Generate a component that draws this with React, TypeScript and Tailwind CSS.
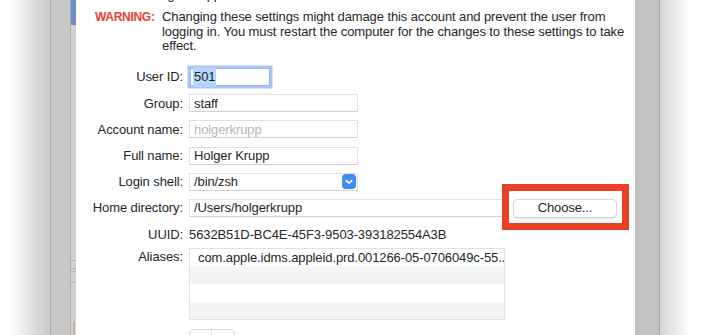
import React from "react";

const font = { fontFamily: "'Liberation Sans', Arial, sans-serif" };

function Row({ label, children }: { label: string; children: React.ReactNode }) {
  return (
    <div className="flex h-[26.2px] items-center">
      <div className="w-[107px] shrink-0 text-right text-[13px] text-[#262626]">{label}</div>
      <div className="ml-[6px] flex items-center">{children}</div>
    </div>
  );
}

function Field({ value, w, gray = false }: { value: string; w: string; gray?: boolean }) {
  return (
    <div className={"flex h-[18px] items-center border border-[#e0e0e0] border-b-[#cfcfcf] bg-white pl-[4px] text-[13px] " + w + (gray ? " text-[#b4b4b4]" : " text-[#1f1f1f]")}>
      {value}
    </div>
  );
}

export default function App() {
  return (
    <div className="relative flex h-[335px] w-[710px] overflow-hidden bg-white tracking-[-0.1px]" style={font}>
      {/* left backdrop */}
      <div className="h-full w-[50px] shrink-0 bg-gradient-to-r from-white from-20% to-[#c8c8c8]" />
      <div className="h-full w-[20px] shrink-0 border-l border-[#ababab] bg-[#c7c7c7]" />
      <div className="flex h-full w-[6px] shrink-0 flex-col border-l border-[#acacac] bg-[#d2d2d2]">
        <div className="h-[25px] w-full bg-[#6f8fc4]" />
        <div className="mt-[235px] h-[10px] w-full border-y border-[#b5b5b5]" />
        <div className="mt-[2px] h-[12px] w-full border-y border-[#b5b5b5]" />
        <div className="mt-[38px] ml-[2px] h-[14px] w-[2px] bg-[#c9b19a]" />
      </div>

      {/* dialog */}
      <div className="flex h-full w-[559px] shrink-0 flex-col bg-white text-[#262626]">
        <div className="mt-[-13px] h-[15px] pl-[66px] text-[13px] leading-[15px] text-[#262626]">Using the apple</div>
        <div className="mt-[8px] flex pl-[19px] text-[13px] leading-[14.5px]">
          <div className="w-[67px] shrink-0 text-[12px] font-bold tracking-[-0.3px] text-[#e8432f]">WARNING:</div>
          <div className="w-[475px] shrink-0 text-[#262626]">
            Changing these settings might damage this account and prevent the user from logging in. You must restart the computer for the changes to these settings to take effect.
          </div>
        </div>

        <div className="mt-[10.5px] flex flex-col">
          <Row label="User ID:">
            <div className="ml-[1px] flex h-[18px] w-[80px] items-center border border-[#9ab8ec] bg-white pl-[2px] text-[13px] text-[#1f1f1f] shadow-[0_0_0_2.5px_#a9c5f3]">
              <span className="bg-[#b4d5fe] px-[1px]">501</span>
            </div>
          </Row>
          <Row label="Group:">
            <Field value="staff" w="w-[169px]" />
          </Row>
          <Row label="Account name:">
            <Field value="holgerkrupp" w="w-[169px]" gray />
          </Row>
          <Row label="Full name:">
            <Field value="Holger Krupp" w="w-[169px]" />
          </Row>
          <Row label="Login shell:">
            <div className="flex h-[18px] w-[169px] items-center justify-between border border-[#e3e3e3] border-b-[#d0d0d0] bg-white pl-[4px] pr-[1px] text-[13px] text-[#1f1f1f]">
              <span>/bin/zsh</span>
              <div className="flex h-[15px] w-[14px] items-center justify-center rounded-[4px] bg-[#3f8cf7]">
                <svg width="8" height="6" viewBox="0 0 8 6">
                  <path d="M1.2 1.6 L4 4.2 L6.8 1.6" stroke="white" strokeWidth="1.6" fill="none" strokeLinecap="round" strokeLinejoin="round" />
                </svg>
              </div>
            </div>
          </Row>
          <Row label="Home directory:">
            <Field value="/Users/holgerkrupp" w="w-[315px]" />
            <button className="ml-[9px] flex h-[19px] w-[104px] items-center justify-center rounded-[5px] border border-[#d6d6d6] bg-white text-[13px] text-[#262626] shadow-[0_0.5px_1px_rgba(0,0,0,0.12)]">
              Choose...
            </button>
          </Row>
          <div className="flex h-[27px] items-center">
            <div className="w-[107px] shrink-0 text-right text-[13px]">UUID:</div>
            <div className="ml-[6px] text-[13px] text-[#262626]">5632B51D-BC4E-45F3-9503-393182554A3B</div>
          </div>
          <div className="flex">
            <div className="flex h-[18px] w-[107px] shrink-0 items-center justify-end text-[13px]">Aliases:</div>
            <div className="ml-[6px] flex w-[316px] flex-col border border-[#e2e2e2]">
              <div className="flex h-[17.5px] items-center overflow-hidden whitespace-nowrap bg-white pl-[8px] text-[13px] text-[#262626]">
                com.apple.idms.appleid.prd.001266-05-0706049c-55...
              </div>
              <div className="h-[17.5px] bg-[#f4f5f5]" />
              <div className="h-[17.5px] bg-white" />
              <div className="h-[17px] bg-[#f4f5f5]" />
            </div>
          </div>
          <div className="ml-[113px] mt-[9px] flex h-[20px] w-[46px] items-start rounded-[5px] border border-[#d6d6d6] bg-white text-[13px] text-[#262626]">
            <div className="flex h-full w-[23px] items-center justify-center border-r border-[#e0e0e0]">+</div>
            <div className="flex h-full w-[23px] items-center justify-center">−</div>
          </div>
        </div>
      </div>

      {/* right backdrop */}
      <div className="h-full w-[25px] shrink-0 border-r border-[#a9a9a9] bg-[#c2c2c2]" />
      <div className="h-full flex-1 bg-gradient-to-r from-[#d6d6d6] to-white to-60%" />

      {/* annotation */}
      <div className="pointer-events-none absolute left-[502px] top-[184px] h-[46px] w-[127px] border-[7px] border-[#ea4126]" />
    </div>
  );
}
